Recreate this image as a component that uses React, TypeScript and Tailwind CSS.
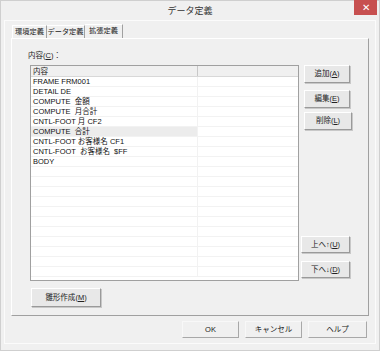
import React from 'react';

const rows = [
    'FRAME FRM001',
    'DETAIL DE',
    'COMPUTE  金額',
    'COMPUTE  月合計',
    'CNTL-FOOT 月 CF2',
    'COMPUTE  合計',
    'CNTL-FOOT お客様名 CF1',
    'CNTL-FOOT  お客様名  $FF',
    'BODY',
];

const font = "font-['Liberation_Sans','Noto_Sans_CJK_JP',sans-serif]";

function Btn({ label, u, className = '' }: { label: string; u: string; className?: string }) {
    return (
        <button
            className={`flex items-center justify-center whitespace-nowrap bg-[#e8e8e8] border border-t-white border-l-white border-r-[#9a9a9a] border-b-[#9a9a9a] shadow-[1px_1px_0_#c8c8c8] text-[7.5px] text-[#222] leading-none ${className}`}
        >
            {label}(<span className="underline">{u}</span>)
        </button>
    );
}

function FlatBtn({ label, className = '' }: { label: string; className?: string }) {
    return (
        <button
            className={`flex items-center justify-center whitespace-nowrap bg-[#f0f0f0] border border-t-[#f8f8f8] border-l-[#f8f8f8] border-r-[#a8a8a8] border-b-[#a8a8a8] text-[7.5px] text-[#222] leading-none ${className}`}
        >
            {label}
        </button>
    );
}

export default function App() {
    return (
        <div className={`w-[380px] h-[351px] bg-[#f0f0f0] border border-[#cfcfcf] flex flex-col ${font}`}>
            {/* title bar */}
            <div className="h-[19px] relative flex items-center justify-center shrink-0">
                <span className="text-[9px] text-[#333] mt-[3px]">データ定義</span>
                <div className="absolute right-[2px] top-[-1px] w-[23px] h-[15px] bg-[#c75050] flex items-center justify-center text-white text-[10px] leading-none">
                    ✕
                </div>
            </div>

            {/* client */}
            <div className="flex-1 mx-[3px] mb-[6px] border border-[#fbfbfb] flex flex-col">
                {/* tabs */}
                <div className="flex h-[14px] mt-[3px] ml-[7px] items-end">
                    <div className="h-[13px] w-[35px] flex items-center justify-center whitespace-nowrap border-l border-t border-white border-r border-r-[#a0a0a0] text-[7.2px] text-[#222]">
                        環境定義
                    </div>
                    <div className="h-[13px] w-[38px] flex items-center justify-center whitespace-nowrap border-t border-white border-r border-r-[#a0a0a0] text-[7.2px] text-[#222]">
                        データ定義
                    </div>
                    <div className="h-[14px] w-[38px] flex items-center justify-center whitespace-nowrap border-t border-white border-r border-r-[#a0a0a0] text-[7.2px] text-[#222] bg-[#f0f0f0]">
                        拡張定義
                    </div>
                </div>

                {/* panel */}
                <div className="ml-[6px] w-[358px] h-[278px] border border-t-white border-l-white border-r-[#a0a0a0] border-b-[#a0a0a0] flex flex-col">
                    <div className="text-[7.5px] text-[#222] ml-[16px] mt-[12px] leading-[9px]">
                        内容(<span className="underline">C</span>)：
                    </div>

                    <div className="flex mt-[5px]">
                        {/* list */}
                        <div className="ml-[18px] w-[269px] h-[216px] bg-white border border-[#a0a0a0] overflow-hidden">
                            <div className="flex h-[11px] bg-[#f0f0f0] border-b border-[#d8d8d8]">
                                <div className="w-[167px] border-r border-[#c8c8c8] text-[7.5px] text-[#222] leading-[11px] pl-[2px]">内容</div>
                                <div className="flex-1" />
                            </div>
                            {Array.from({ length: 20 }).map((_, i) => (
                                <div key={i} className="flex h-[10px] border-b border-[#f2f2f2]">
                                    <div
                                        className={`w-[167px] border-r border-[#f2f2f2] text-[7.5px] text-[#111] leading-[9px] pl-[2px] whitespace-pre ${i === 5 ? 'bg-[#ececec]' : ''}`}
                                    >
                                        {rows[i] ?? ''}
                                    </div>
                                    <div className="flex-1" />
                                </div>
                            ))}
                        </div>

                        {/* side buttons */}
                        <div className="flex flex-col ml-[5px] w-[48px] h-[216px]">
                            <Btn label="追加" u="A" className="w-[46px] h-[18px]" />
                            <Btn label="編集" u="E" className="w-[46px] h-[18px] mt-[7px]" />
                            <Btn label="削除" u="L" className="w-[48px] h-[18px] mt-[4px]" />
                            <div className="flex-1" />
                            <Btn label="上へ↑" u="U" className="w-[49px] h-[17px] -ml-[3px]" />
                            <Btn label="下へ↓" u="D" className="w-[49px] h-[17px] -ml-[3px] mt-[8px] mb-[3px]" />
                        </div>
                    </div>

                    <Btn label="雛形作成" u="M" className="w-[70px] h-[19px] ml-[19px] mt-[7px]" />
                </div>

                {/* bottom buttons */}
                <div className="flex justify-end gap-[6px] mr-[8px] mt-[5px]">
                    <FlatBtn label="OK" className="w-[57px] h-[17px]" />
                    <FlatBtn label="キャンセル" className="w-[57px] h-[17px]" />
                    <FlatBtn label="ヘルプ" className="w-[59px] h-[17px]" />
                </div>
            </div>
        </div>
    );
}
